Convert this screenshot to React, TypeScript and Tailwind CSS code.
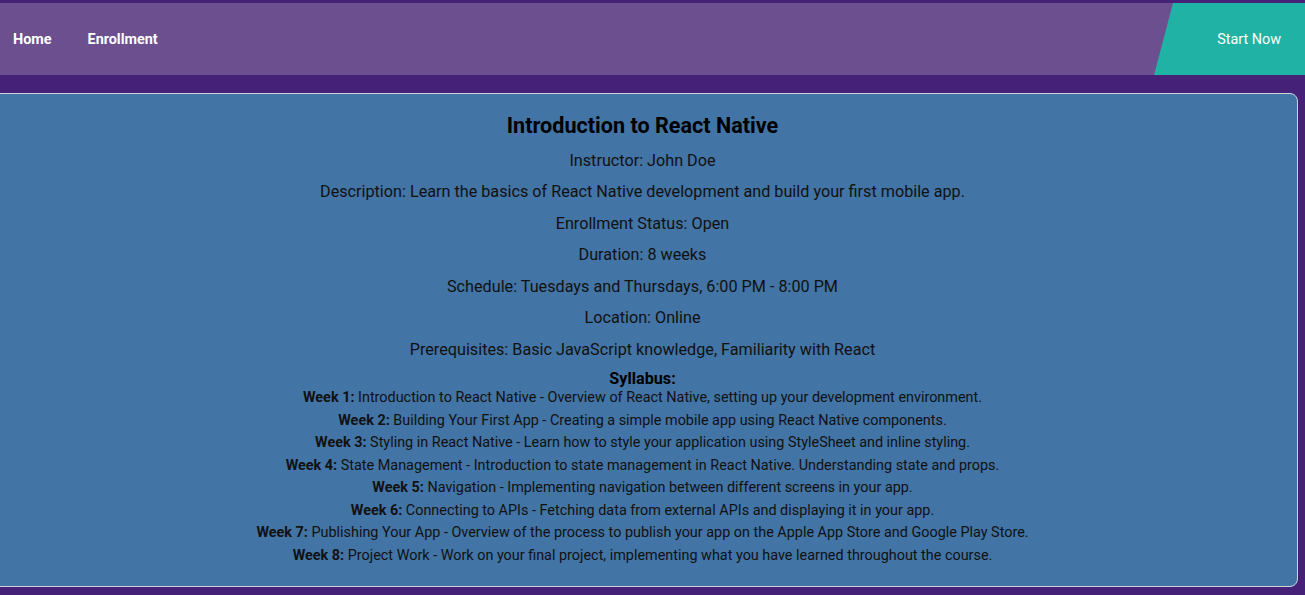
const weeks: [string, string][] = [
  ["Week 1:", "Introduction to React Native - Overview of React Native, setting up your development environment."],
  ["Week 2:", "Building Your First App - Creating a simple mobile app using React Native components."],
  ["Week 3:", "Styling in React Native - Learn how to style your application using StyleSheet and inline styling."],
  ["Week 4:", "State Management - Introduction to state management in React Native. Understanding state and props."],
  ["Week 5:", "Navigation - Implementing navigation between different screens in your app."],
  ["Week 6:", "Connecting to APIs - Fetching data from external APIs and displaying it in your app."],
  ["Week 7:", "Publishing Your App - Overview of the process to publish your app on the Apple App Store and Google Play Store."],
  ["Week 8:", "Project Work - Work on your final project, implementing what you have learned throughout the course."],
];

const details = [
  "Instructor: John Doe",
  "Description: Learn the basics of React Native development and build your first mobile app.",
  "Enrollment Status: Open",
  "Duration: 8 weeks",
  "Schedule: Tuesdays and Thursdays, 6:00 PM - 8:00 PM",
  "Location: Online",
  "Prerequisites: Basic JavaScript knowledge, Familiarity with React",
];

export default function App() {
  return (
    <div
      className="min-h-[595px] w-full overflow-hidden bg-[#462178] pt-[3px] pb-[9px]"
      style={{ fontFamily: "Roboto, 'Liberation Sans', sans-serif" }}
    >
      <header className="relative flex h-[72px] items-center bg-[#6b4f8f]">
        <nav className="flex items-center gap-[36px] pl-[13px] pt-[2px] text-[14.4px] font-bold text-white">
          <a href="#">Home</a>
          <a href="#">Enrollment</a>
        </nav>
        <div className="absolute right-0 top-0 flex h-full w-[151px] items-center justify-end bg-[#20b2a5] pr-[24px] pt-[2px] text-[14.4px] font-normal text-white [clip-path:polygon(19px_0,100%_0,100%_100%,0_100%)]">
          Start Now
        </div>
      </header>

      <main className="ml-[-13px] mr-[7px] mt-[18px] rounded-[8px] border border-[#c9d3e0] bg-[#4274a5] pt-[20px] pb-[19px] text-center text-[#111]">
        <h2 className="text-[21.6px] font-bold leading-[24px] text-black">Introduction to React Native</h2>
        <div className="mt-[12.5px] flex flex-col gap-[12.6px] text-[16.2px] leading-[19px]">
          {details.map((d) => (
            <p key={d}>{d}</p>
          ))}
        </div>
        <h3 className="mt-[12px] text-[16.2px] font-bold leading-[16px] text-black">Syllabus:</h3>
        <ul className="text-[14.4px] leading-[22.5px]">
          {weeks.map(([w, t]) => (
            <li key={w}>
              <span className="font-bold">{w}</span> {t}
            </li>
          ))}
        </ul>
      </main>
    </div>
  );
}
